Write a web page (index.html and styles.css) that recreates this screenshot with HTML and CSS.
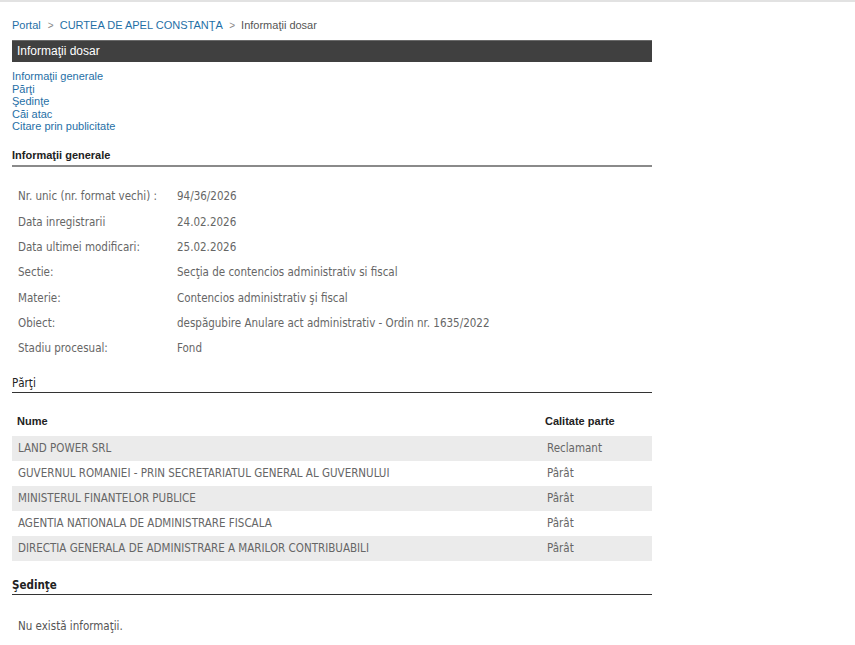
FILE: index.html
```html
<!DOCTYPE html>
<html lang="ro">
<head>
    <meta charset="UTF-8">
    <title>Informaţii dosar</title>
    <link rel="stylesheet" href="styles.css">
</head>
<body>
    <div class="top-line"></div>
    <div class="page">
        <div class="breadcrumb">
            <a href="#">Portal</a>
            <span class="sep">&gt;</span>
            <a href="#">CURTEA DE APEL CONSTANŢA</a>
            <span class="sep">&gt;</span>
            <span class="current">Informaţii dosar</span>
        </div>

        <div class="title-bar">Informaţii dosar</div>

        <div class="anchors">
            <a href="#generale">Informaţii generale</a>
            <a href="#parti">Părţi</a>
            <a href="#sedinte">Şedinţe</a>
            <a href="#cai">Căi atac</a>
            <a href="#citare">Citare prin publicitate</a>
        </div>

        <h3 class="section-title" id="generale">Informaţii generale</h3>
        <table class="info-table">
            <tr><td class="label">Nr. unic (nr. format vechi) :</td><td>94/36/2026</td></tr>
            <tr><td class="label">Data inregistrarii</td><td>24.02.2026</td></tr>
            <tr><td class="label">Data ultimei modificari:</td><td>25.02.2026</td></tr>
            <tr><td class="label">Sectie:</td><td>Secţia de contencios administrativ si fiscal</td></tr>
            <tr><td class="label">Materie:</td><td>Contencios administrativ şi fiscal</td></tr>
            <tr><td class="label">Obiect:</td><td>despăgubire Anulare act administrativ - Ordin nr. 1635/2022</td></tr>
            <tr><td class="label">Stadiu procesual:</td><td>Fond</td></tr>
        </table>

        <h3 class="section-title dark" id="parti">Părţi</h3>
        <table class="parti-table">
            <tr class="head"><th>Nume</th><th class="col-calitate">Calitate parte</th></tr>
            <tr class="odd"><td>LAND POWER SRL</td><td>Reclamant</td></tr>
            <tr><td>GUVERNUL ROMANIEI - PRIN SECRETARIATUL GENERAL AL GUVERNULUI</td><td>Pârât</td></tr>
            <tr class="odd"><td>MINISTERUL FINANTELOR PUBLICE</td><td>Pârât</td></tr>
            <tr><td>AGENTIA NATIONALA DE ADMINISTRARE FISCALA</td><td>Pârât</td></tr>
            <tr class="odd"><td>DIRECTIA GENERALA DE ADMINISTRARE A MARILOR CONTRIBUABILI</td><td>Pârât</td></tr>
        </table>

        <h3 class="section-title dark bold" id="sedinte">Şedinţe</h3>
        <p class="empty">Nu există informaţii.</p>
    </div>
</body>
</html>
```

FILE: styles.css
```css
body {
    margin: 0;
    background: #fff;
    font-family: 'Liberation Sans', Arial, sans-serif;
    font-size: 11px;
    color: #333;
}

.top-line {
    height: 2px;
    background: #e2e2e2;
}

.page {
    width: 640px;
    margin-left: 12px;
}

a {
    color: #1f6fa6;
    text-decoration: none;
}

.breadcrumb {
    padding-top: 17px;
    height: 21px;
    font-size: 11px;
}
.breadcrumb .sep {
    color: #888;
    font-size: 10px;
    margin: 0 3px 0 4px;
}
.breadcrumb .current {
    color: #555;
}

.title-bar {
    background: #404040;
    color: #fff;
    font-size: 12px;
    height: 22px;
    line-height: 21px;
    padding-left: 5px;
    border-top: 1px solid #6a6a6a;
    box-sizing: border-box;
}

.anchors {
    margin-top: 8px;
    display: flex;
    flex-direction: column;
    line-height: 12.5px;
}

.section-title {
    margin: 15px 0 0;
    font-size: 11px;
    font-weight: bold;
    color: #222;
    padding-bottom: 3px;
    border-bottom: 2px solid #8a8a8a;
    line-height: 14px;
}
.section-title.dark {
    font-family: Tahoma, 'DejaVu Sans Condensed', sans-serif;
    font-weight: normal;
    border-bottom: 1px solid #333;
    font-size: 11.5px;
    padding-bottom: 2px;
}
.section-title.dark.bold {
    font-weight: bold;
}

table {
    border-collapse: collapse;
    width: 100%;
}

.info-table {
    margin-top: 17px;
    margin-bottom: 7px;
    font-family: Tahoma, 'DejaVu Sans Condensed', sans-serif;
    font-size: 11.5px;
    color: #666;
}
.info-table td {
    height: 25.35px;
    padding: 0 0 0 6px;
}
.info-table td.label {
    width: 153px;
}

.parti-table {
    margin-top: 14px;
    font-family: Tahoma, 'DejaVu Sans Condensed', sans-serif;
    font-size: 11.5px;
    color: #666;
}
.parti-table th {
    font-family: 'Liberation Sans', Arial, sans-serif;
    font-size: 11px;
    color: #222;
    text-align: left;
    height: 29px;
    padding: 0 0 0 5px;
}
.parti-table th.col-calitate {
    padding-left: 4px;
}
.parti-table td {
    height: 25px;
    padding: 0 0 0 6px;
}
.parti-table .col-calitate {
    width: 107px;
}
.parti-table tr.odd {
    background: #ebebeb;
}

#sedinte {
    margin-top: 17px;
}

.empty {
    font-family: Tahoma, 'DejaVu Sans Condensed', sans-serif;
    font-size: 11.5px;
    color: #555;
    margin: 24px 0 0 6px;
}
```
